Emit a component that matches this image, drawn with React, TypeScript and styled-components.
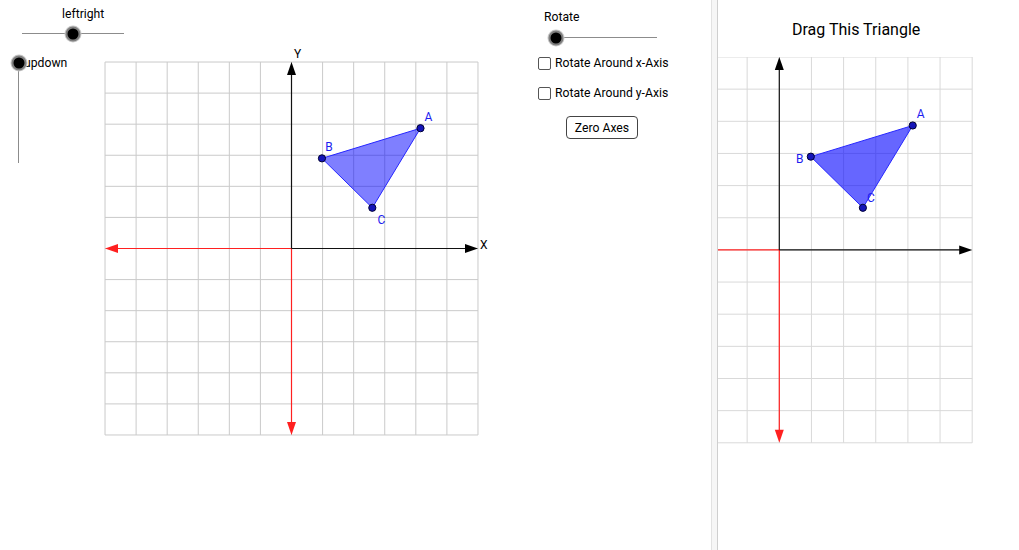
import React from 'react';
import styled, {createGlobalStyle} from 'styled-components';

// language=CSS
const GlobalStyle = createGlobalStyle`
  html, body {
    margin: 0;
    padding: 0;
    background: #fff;
  }

  body {
    font-family: Roboto, "Liberation Sans", sans-serif;
    color: #000;
  }
`

type Pt = [number, number];

// triangle in graph units, same one drawn on both planes
const TRI: { name: string, p: Pt }[] = [
    {name: 'A', p: [4.15, 3.87]},
    {name: 'B', p: [0.98, 2.9]},
    {name: 'C', p: [2.6, 1.31]},
];

const Page = styled.div`
  display: flex;
  width: 1019px;
  height: 550px;
  overflow: hidden;
`

const LeftApplet = styled.div`
  width: 711px;
  display: flex;
  align-items: flex-start;
`

const CanvasArea = styled.div`
  width: 538px;
  display: flex;
  flex-direction: column;
`

const TopRow = styled.div`
  height: 62px;
  box-sizing: border-box;
  padding: 7px 0 0 22px;
`

const MainRow = styled.div`
  display: flex;
  align-items: flex-start;
`

const SideArea = styled.div`
  width: 105px;
  flex: none;
`

const SliderBox = styled.div<{ $width: number, $left?: number }>`
  width: ${p => p.$width}px;
  margin-left: ${p => p.$left || 0}px;
  display: flex;
  flex-direction: column;
`

const Label = styled.span<{ $indent?: number }>`
  font-size: 12.2px;
  line-height: 14px;
  white-space: nowrap;
  padding-left: ${p => p.$indent || 0}px;
`

const HTrack = styled.div<{ $gap: number }>`
  position: relative;
  height: 1px;
  margin-top: ${p => p.$gap}px;
  background: #8c8c8c;
`

const Knob = styled.span`
  position: absolute;
  width: 11px;
  height: 11px;
  border-radius: 50%;
  background: #000;
  border: 2px solid #7e7e7e;
  box-shadow: 0 0 0 1px #c8c8c8;
  transform: translate(-50%, -50%);
`

const VSliderBox = styled.div`
  display: flex;
  align-items: flex-start;
  padding: 1px 0 0 18px;
`

const VTrack = styled.div`
  position: relative;
  width: 1px;
  height: 100px;
  background: #8c8c8c;
`

const VLabel = styled(Label)`
  margin: -7px 0 0 5px;
`

const Controls = styled.div`
  display: flex;
  flex-direction: column;
  align-items: flex-start;
  padding-top: 10px;
`

const CheckRow = styled.div<{ $gap: number }>`
  display: flex;
  align-items: center;
  gap: 4px;
  height: 14px;
  margin-top: ${p => p.$gap}px;
`

const Box = styled.span`
  width: 13px;
  height: 13px;
  box-sizing: border-box;
  border: 1px solid #555;
  border-radius: 2px;
  background: #fff;
`

const Button = styled.button`
  margin: 16px 0 0 28px;
  width: 72px;
  height: 23px;
  padding: 0;
  background: #fff;
  border: 1px solid #444;
  border-radius: 4px;
  font-family: Roboto, "Liberation Sans", sans-serif;
  font-size: 12.2px;
  color: #000;
`

const Divider = styled.div`
  width: 7px;
  flex: none;
  box-sizing: border-box;
  height: 550px;
  background: #f6f6f6;
  border-left: 1px solid #e2e2e2;
  border-right: 1px solid #cfcfcf;
`

const RightApplet = styled.div`
  flex: 1;
  display: flex;
  flex-direction: column;
`

const Title = styled.div`
  padding: 20px 0 0 74px;
  font-size: 16px;
  line-height: 20px;
`

const PlaneSvg = styled.svg<{ $clip?: boolean, $top?: number }>`
  display: block;
  flex: none;
  margin-top: ${p => p.$top || 0}px;
  overflow: ${p => p.$clip ? 'hidden' : 'visible'};
`

const PointLabel = styled.text`
  font-family: Roboto, "Liberation Sans", sans-serif;
  font-size: 12px;
  fill: #1c1cf0;
`

const AxisName = styled.text`
  font-family: Roboto, "Liberation Sans", sans-serif;
  font-size: 12px;
  fill: #000;
`

function HSlider({label, width, value, indent, left, gap}: {
    label?: string, width: number, value: number, indent?: number, left?: number, gap: number
}) {
    return (
        <SliderBox $width={width} $left={left}>
            {label && <Label $indent={indent}>{label}</Label>}
            <HTrack $gap={gap}>
                <Knob style={{left: `${value * 100}%`, top: '50%'}}/>
            </HTrack>
        </SliderBox>
    )
}

function VSlider({label, value}: { label: string, value: number }) {
    return (
        <VSliderBox>
            <VTrack>
                <Knob style={{left: '50%', top: `${(1 - value) * 100}%`}}/>
            </VTrack>
            <VLabel>{label}</VLabel>
        </VSliderBox>
    )
}

function arrow(x: number, y: number, dir: 'l' | 'r' | 'u' | 'd') {
    const L = 13, W = 4.5
    switch (dir) {
        case 'r':
            return `${x},${y} ${x - L},${y - W} ${x - L},${y + W}`
        case 'l':
            return `${x},${y} ${x + L},${y - W} ${x + L},${y + W}`
        case 'u':
            return `${x},${y} ${x - W},${y + L} ${x + W},${y + L}`
        default:
            return `${x},${y} ${x - W},${y - L} ${x + W},${y - L}`
    }
}

function Plane({unit, ox, oy, width, height, kMin, gridColor, fillOpacity, offsets, axisNames, leftArrow, clip, top}: {
    unit: number, ox: number, oy: number, width: number, height: number, kMin: number,
    gridColor: string, fillOpacity: number, offsets: Pt[], axisNames?: boolean, leftArrow?: boolean,
    clip?: boolean, top?: number
}) {
    const px = (p: Pt): Pt => [ox + p[0] * unit, oy - p[1] * unit]
    const cols = []
    for (let k = kMin; k <= 6; k++) cols.push(ox + k * unit)
    const rows = []
    for (let k = -6; k <= 6; k++) rows.push(oy + k * unit)
    const left = Math.max(0, ox + kMin * unit)
    const right = ox + 6 * unit
    const bottom = oy + 6 * unit
    const topY = oy - 6 * unit
    const pts = TRI.map(t => px(t.p))

    return (
        <PlaneSvg width={width} height={height} viewBox={`0 0 ${width} ${height}`} $clip={clip} $top={top}>
            <g stroke={gridColor} strokeWidth={1}>
                {cols.map(x => <line key={'c' + x} x1={x} y1={topY} x2={x} y2={bottom}/>)}
                {rows.map(y => <line key={'r' + y} x1={left} y1={y} x2={right} y2={y}/>)}
            </g>

            <line x1={left + (leftArrow ? 6 : 0)} y1={oy} x2={ox} y2={oy} stroke="#ff2020" strokeWidth={1.2}/>
            {leftArrow && <polygon points={arrow(left, oy, 'l')} fill="#ff2020"/>}
            <line x1={ox} y1={oy} x2={ox} y2={bottom - 6} stroke="#ff2020" strokeWidth={1.2}/>
            <polygon points={arrow(ox, bottom, 'd')} fill="#ff2020"/>

            <line x1={ox} y1={oy} x2={right - 6} y2={oy} stroke="#111" strokeWidth={1.2}/>
            <polygon points={arrow(right, oy, 'r')} fill="#000"/>
            <line x1={ox} y1={oy} x2={ox} y2={topY + 6} stroke="#111" strokeWidth={1.2}/>
            <polygon points={arrow(ox, topY, 'u')} fill="#000"/>

            {axisNames && <>
                <AxisName x={right + 2} y={oy - 4} dominantBaseline="central">X</AxisName>
                <AxisName x={ox + 6} y={topY - 8} textAnchor="middle" dominantBaseline="central">Y</AxisName>
            </>}

            <polygon points={pts.map(p => p.join(',')).join(' ')}
                     fill="#0000ff" fillOpacity={fillOpacity}
                     stroke="#2626ff" strokeWidth={1}/>
            {pts.map((p, i) => (
                <g key={TRI[i].name}>
                    <circle cx={p[0]} cy={p[1]} r={3.6} fill="#1414b8" stroke="#000033" strokeWidth={1}/>
                    <PointLabel x={p[0] + offsets[i][0]} y={p[1] + offsets[i][1]}
                                textAnchor="middle" dominantBaseline="central">{TRI[i].name}</PointLabel>
                </g>
            ))}
        </PlaneSvg>
    )
}

export default function App() {
    return (
        <Page>
            <GlobalStyle/>
            <LeftApplet>
                <CanvasArea>
                    <TopRow>
                        <HSlider label="leftright" width={102} value={0.5} indent={40} gap={12}/>
                    </TopRow>
                    <MainRow>
                        <SideArea>
                            <VSlider label="updown" value={1}/>
                        </SideArea>
                        <Plane unit={31.08} ox={186.5} oy={186.5} width={374} height={374} kMin={-6}
                               gridColor="#cacaca" fillOpacity={0.5} axisNames leftArrow
                               offsets={[[8, -11], [7, -11], [9, 12]]}/>
                    </MainRow>
                </CanvasArea>
                <Controls>
                    <Label $indent={6}>Rotate</Label>
                    <HSlider width={101} value={0} left={18} gap={13}/>
                    <CheckRow $gap={18}>
                        <Box/>
                        <Label>Rotate Around x-Axis</Label>
                    </CheckRow>
                    <CheckRow $gap={16}>
                        <Box/>
                        <Label>Rotate Around y-Axis</Label>
                    </CheckRow>
                    <Button>Zero Axes</Button>
                </Controls>
            </LeftApplet>
            <Divider/>
            <RightApplet>
                <Title>Drag This Triangle</Title>
                <Plane unit={32.15} ox={61.3} oy={192.9} width={256} height={387} kMin={-2} top={17}
                       gridColor="#d9d9d9" fillOpacity={0.6} clip
                       offsets={[[8, -11], [-11, 2], [8, -10]]}/>
            </RightApplet>
        </Page>
    );
}
